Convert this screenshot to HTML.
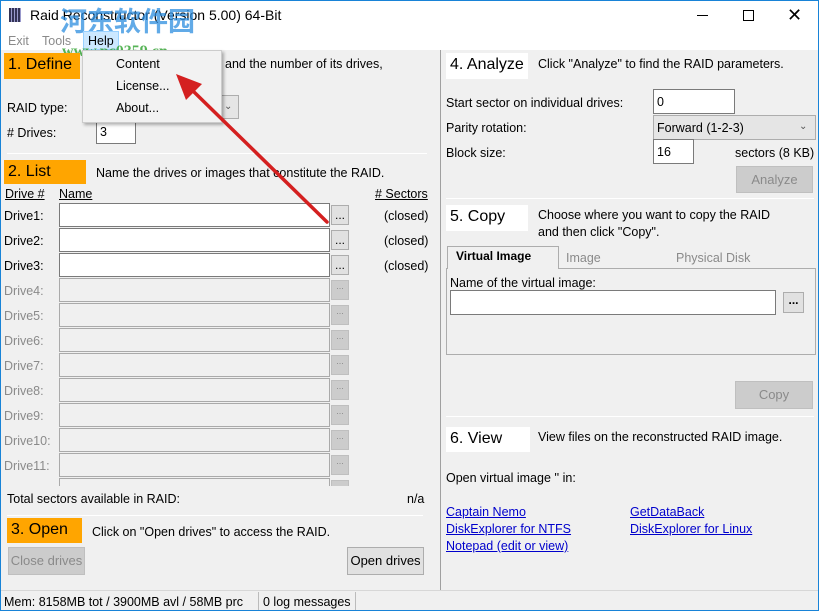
<!DOCTYPE html>
<html><head><meta charset="utf-8">
<style>
*{box-sizing:border-box;margin:0;padding:0}
body{width:819px;height:611px;overflow:hidden;background:#f0f0f0;font-family:"Liberation Sans","Noto Sans CJK SC",sans-serif;font-size:12.5px;color:#000;position:relative}
.a{position:absolute;white-space:nowrap;line-height:16px}
.box{position:absolute}
.or{background:#ffa500;font-size:16px;padding-left:4px;line-height:24px}
.wh{background:#fff;font-size:16px;padding-left:4px;line-height:24px}
.in{position:absolute;background:#fff;border:1px solid #7a7a7a}
.dis{background:#f0f0f0;border-color:#aaa}
.btn{position:absolute;background:#e1e1e1;border:1px solid #adadad;text-align:center;font-size:12px;line-height:18px}
.btnd{position:absolute;background:#cccccc;border:1px solid #bfbfbf;color:#8a8a8a;text-align:center;font-size:13px}
.hr{position:absolute;height:1px;background:#a0a0a0;border-bottom:1px solid #fff}
.g{color:#8a8a8a}
a{color:#0000cc;text-decoration:underline}
</style></head><body>
<!-- window border -->
<div class="box" style="left:0;top:0;width:819px;height:611px;border:1px solid #1883d7;z-index:50;pointer-events:none"></div>
<!-- title bar -->
<div class="box" style="left:0;top:0;width:819px;height:50px;background:#fff"></div>
<div class="box" style="left:9px;top:8px;width:12px;height:14px;background:repeating-linear-gradient(90deg,#335 0 2px,#99c 2px 3px)"></div>
<div class="a" style="left:30px;top:7px;font-size:14px">Raid Reconstructor (Version 5.00) 64-Bit</div>
<div class="a" style="left:60px;top:5px;font-size:27px;font-weight:bold;color:#2d8ee0;opacity:.75;line-height:30px;font-family:'Noto Sans CJK SC',sans-serif">河东软件园</div>
<div class="box" style="left:697px;top:15px;width:11px;height:1px;background:#000"></div>
<div class="box" style="left:743px;top:10px;width:11px;height:11px;border:1px solid #000"></div>
<div class="a" style="left:787px;top:5px;font-size:18px;line-height:20px">✕</div>
<!-- menu -->
<div class="a g" style="left:8px;top:33px">Exit</div>
<div class="a g" style="left:42px;top:33px">Tools</div>
<div class="box" style="left:83px;top:31px;width:36px;height:19px;background:#cce8ff;border:1px solid #99d1ff"></div>
<div class="a" style="left:88px;top:33px">Help</div>
<div class="a" style="left:62px;top:44px;font-size:16px;font-weight:bold;color:#3aa83a;opacity:.85;font-family:'Liberation Serif',serif">www.pc0359.cn</div>

<!-- left panel -->
<div class="box or" style="left:4px;top:53px;width:76px;height:26px">1. Define</div>
<div class="a" style="left:225px;top:56px">and the number of its drives,</div>
<div class="a" style="left:7px;top:100px">RAID type:</div>
<div class="box" style="left:100px;top:95px;width:139px;height:24px;background:#e5e5e5;border:1px solid #adadad"></div>
<div class="a" style="left:224px;top:99px;font-size:10px;color:#555">&#8964;</div>
<div class="a" style="left:7px;top:125px"># Drives:</div>
<div class="in" style="left:96px;top:120px;width:40px;height:24px"><span class="a" style="left:3px;top:3px">3</span></div>
<div class="hr" style="left:7px;top:153px;width:420px"></div>
<div class="box or" style="left:4px;top:160px;width:82px;height:24px">2. List</div>
<div class="a" style="left:96px;top:165px">Name the drives or images that constitute the RAID.</div>
<div class="a" style="left:5px;top:186px;text-decoration:underline">Drive #</div>
<div class="a" style="left:59px;top:186px;text-decoration:underline">Name</div>
<div class="a" style="left:375px;top:186px;text-decoration:underline"># Sectors</div>

<div class="box" style="left:0;top:200px;width:440px;height:286px;overflow:hidden">
<div class="a" style="left:4px;top:8px">Drive1:</div><div class="in" style="left:59px;top:3px;width:271px;height:24px"></div><div class="btn" style="left:331px;top:5px;width:18px;height:20px">...</div><div class="a" style="left:384px;top:8px">(closed)</div>
<div class="a" style="left:4px;top:33px">Drive2:</div><div class="in" style="left:59px;top:28px;width:271px;height:24px"></div><div class="btn" style="left:331px;top:30px;width:18px;height:20px">...</div><div class="a" style="left:384px;top:33px">(closed)</div>
<div class="a" style="left:4px;top:58px">Drive3:</div><div class="in" style="left:59px;top:53px;width:271px;height:24px"></div><div class="btn" style="left:331px;top:55px;width:18px;height:20px">...</div><div class="a" style="left:384px;top:58px">(closed)</div>
<div class="a g" style="left:4px;top:83px">Drive4:</div><div class="in dis" style="left:59px;top:78px;width:271px;height:24px"></div><div class="btnd" style="left:331px;top:80px;width:18px;height:20px;font-size:9px">...</div>
<div class="a g" style="left:4px;top:108px">Drive5:</div><div class="in dis" style="left:59px;top:103px;width:271px;height:24px"></div><div class="btnd" style="left:331px;top:105px;width:18px;height:20px;font-size:9px">...</div>
<div class="a g" style="left:4px;top:133px">Drive6:</div><div class="in dis" style="left:59px;top:128px;width:271px;height:24px"></div><div class="btnd" style="left:331px;top:130px;width:18px;height:20px;font-size:9px">...</div>
<div class="a g" style="left:4px;top:158px">Drive7:</div><div class="in dis" style="left:59px;top:153px;width:271px;height:24px"></div><div class="btnd" style="left:331px;top:155px;width:18px;height:20px;font-size:9px">...</div>
<div class="a g" style="left:4px;top:183px">Drive8:</div><div class="in dis" style="left:59px;top:178px;width:271px;height:24px"></div><div class="btnd" style="left:331px;top:180px;width:18px;height:20px;font-size:9px">...</div>
<div class="a g" style="left:4px;top:208px">Drive9:</div><div class="in dis" style="left:59px;top:203px;width:271px;height:24px"></div><div class="btnd" style="left:331px;top:205px;width:18px;height:20px;font-size:9px">...</div>
<div class="a g" style="left:4px;top:233px">Drive10:</div><div class="in dis" style="left:59px;top:228px;width:271px;height:24px"></div><div class="btnd" style="left:331px;top:230px;width:18px;height:20px;font-size:9px">...</div>
<div class="a g" style="left:4px;top:258px">Drive11:</div><div class="in dis" style="left:59px;top:253px;width:271px;height:24px"></div><div class="btnd" style="left:331px;top:255px;width:18px;height:20px;font-size:9px">...</div>
<div class="in dis" style="left:59px;top:278px;width:271px;height:24px"></div><div class="btnd" style="left:331px;top:280px;width:18px;height:20px"></div>
</div>
<div class="a" style="left:7px;top:491px">Total sectors available in RAID:</div>
<div class="a" style="left:407px;top:491px">n/a</div>
<div class="hr" style="left:7px;top:515px;width:416px"></div>
<div class="box or" style="left:7px;top:518px;width:75px;height:25px">3. Open</div>
<div class="a" style="left:92px;top:524px">Click on "Open drives" to access the RAID.</div>
<div class="btnd" style="left:8px;top:547px;width:77px;height:28px;line-height:26px">Close drives</div>
<div class="btn" style="left:347px;top:547px;width:77px;height:28px;line-height:26px;font-size:13px">Open drives</div>

<!-- divider -->
<div class="box" style="left:440px;top:50px;width:1px;height:540px;background:#a0a0a0"></div>

<!-- right panel -->
<div class="box wh" style="left:446px;top:53px;width:82px;height:26px">4. Analyze</div>
<div class="a" style="left:538px;top:56px">Click "Analyze" to find the RAID parameters.</div>
<div class="a" style="left:446px;top:95px">Start sector on individual drives:</div>
<div class="in" style="left:653px;top:89px;width:82px;height:25px"><span class="a" style="left:3px;top:4px">0</span></div>
<div class="a" style="left:446px;top:120px">Parity rotation:</div>
<div class="box" style="left:653px;top:115px;width:163px;height:25px;background:#e5e5e5;border:1px solid #adadad"><span class="a" style="left:3px;top:4px">Forward (1-2-3)</span><span class="a" style="left:145px;top:3px;font-size:10px;color:#555">&#8964;</span></div>
<div class="a" style="left:446px;top:145px">Block size:</div>
<div class="in" style="left:653px;top:139px;width:41px;height:25px"><span class="a" style="left:3px;top:4px">16</span></div>
<div class="a" style="left:735px;top:145px">sectors (8 KB)</div>
<div class="btnd" style="left:736px;top:166px;width:77px;height:27px;line-height:25px">Analyze</div>
<div class="hr" style="left:446px;top:198px;width:368px"></div>
<div class="box wh" style="left:446px;top:205px;width:82px;height:26px">5. Copy</div>
<div class="a" style="left:538px;top:207px">Choose where you want to copy the RAID</div>
<div class="a" style="left:538px;top:224px">and then click "Copy".</div>
<div class="box" style="left:446px;top:268px;width:370px;height:87px;border:1px solid #adadad"></div>
<div class="box" style="left:447px;top:246px;width:112px;height:23px;background:#f0f0f0;border:1px solid #adadad;border-bottom:none"></div>
<div class="a" style="left:456px;top:248px;font-weight:bold;font-size:12px">Virtual Image</div>
<div class="a g" style="left:566px;top:250px">Image</div>
<div class="a g" style="left:676px;top:250px">Physical Disk</div>
<div class="a" style="left:450px;top:275px">Name of the virtual image:</div>
<div class="in" style="left:450px;top:290px;width:326px;height:25px"></div>
<div class="btn" style="left:783px;top:292px;width:21px;height:21px;font-weight:bold;line-height:14px">...</div>
<div class="btnd" style="left:735px;top:381px;width:78px;height:28px;line-height:26px">Copy</div>
<div class="hr" style="left:446px;top:416px;width:368px"></div>
<div class="box wh" style="left:446px;top:427px;width:84px;height:25px">6. View</div>
<div class="a" style="left:538px;top:429px">View files on the reconstructed RAID image.</div>
<div class="a" style="left:446px;top:470px">Open virtual image '' in:</div>
<div class="a" style="left:446px;top:504px"><a>Captain Nemo</a></div>
<div class="a" style="left:446px;top:521px"><a>DiskExplorer for NTFS</a></div>
<div class="a" style="left:446px;top:538px"><a>Notepad (edit or view)</a></div>
<div class="a" style="left:630px;top:504px"><a>GetDataBack</a></div>
<div class="a" style="left:630px;top:521px"><a>DiskExplorer for Linux</a></div>

<!-- status bar -->
<div class="box" style="left:0;top:590px;width:819px;height:21px;background:#f0f0f0;border-top:1px solid #d7d7d7"></div>
<div class="a" style="left:4px;top:594px">Mem: 8158MB tot / 3900MB avl / 58MB prc</div>
<div class="box" style="left:258px;top:592px;width:1px;height:18px;background:#bbb"></div>
<div class="a" style="left:263px;top:594px">0 log messages</div>
<div class="box" style="left:355px;top:592px;width:1px;height:18px;background:#bbb"></div>

<!-- dropdown menu -->
<div class="box" style="left:82px;top:50px;width:140px;height:73px;background:#f2f2f2;border:1px solid #ccc;box-shadow:2px 2px 3px rgba(0,0,0,.3)"></div>
<div class="a" style="left:116px;top:56px">Content</div>
<div class="a" style="left:116px;top:78px">License...</div>
<div class="a" style="left:116px;top:100px">About...</div>

<!-- red arrow -->
<svg class="box" style="left:0;top:0;z-index:40" width="819" height="611">
<line x1="327" y1="222" x2="192" y2="90" stroke="#d42020" stroke-width="3.5" stroke-linecap="round"/>
<polygon points="176,74 202,84 186,100" fill="#d42020"/>
</svg>
</body></html>
